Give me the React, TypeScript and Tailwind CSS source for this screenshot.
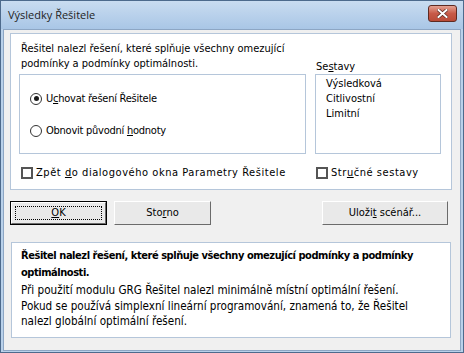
import React from 'react'

const Radio = ({ checked }: { checked?: boolean }) => (
  <span className="w-[12px] h-[12px] rounded-full border-[1.5px] border-[#333] bg-white flex items-center justify-center shrink-0">
    {checked && <span className="w-[5px] h-[5px] rounded-full bg-[#1a1a1a]" />}
  </span>
)

const Check = () => (
  <span className="w-[12px] h-[12px] border-2 border-[#555] bg-white shrink-0" />
)

const Btn = ({ children, w, isDefault }: { children: React.ReactNode; w: string; isDefault?: boolean }) => (
  <button
    className={`${w} h-[24px] ${isDefault ? 'border border-black' : ''} bg-[#e9e9e9] p-0`}
  >
    <span className="flex h-full w-full border-t border-l border-t-white border-l-white border-b border-r border-b-[#6b6b6b] border-r-[#6b6b6b] items-center justify-center">
      {isDefault ? (
        <span className="flex items-center justify-center w-[calc(100%-6px)] h-[calc(100%-6px)] border border-dotted border-black">
          {children}
        </span>
      ) : (
        children
      )}
    </span>
  </button>
)

export default function App() {
  return (
    <div className="w-[464px] h-[353px] flex flex-col border border-[#4d6a8c] bg-[#b9d1ea] text-[11px] text-black font-['DejaVu_Sans_Condensed',sans-serif]">
      {/* title bar */}
      <div className="h-[28px] flex items-start justify-between bg-gradient-to-b from-[#c9dcf0] to-[#a9c6e6] pl-[7px] pr-[6px]">
        <span className="mt-[6px] text-[11px] font-['Open_Sans',sans-serif] text-[#1e1e1e]">Výsledky Řešitele</span>
        <span className="mt-[4px] w-[29px] h-[17px] rounded-[3px] border border-[#5e2a22] bg-gradient-to-b from-[#e3a193] via-[#c75a48] to-[#b94b38] flex items-center justify-center">
          <svg width="11" height="9" viewBox="0 0 11 9">
            <path d="M1.5 1 L9.5 8 M9.5 1 L1.5 8" stroke="#5a2a22" strokeWidth="3.4" strokeLinecap="square" />
            <path d="M1.5 1 L9.5 8 M9.5 1 L1.5 8" stroke="#fff" strokeWidth="2" strokeLinecap="square" />
          </svg>
        </span>
      </div>

      {/* client */}
      <div className="flex-1 mx-[2px] mb-[1px] border border-[#8da6c4] bg-[#f0f0f0] flex flex-col px-[6px] pt-[3px]">
        {/* top panel */}
        <div className="w-[442px] h-[157px] border border-[#b5c6da] bg-white flex flex-col pl-[8px] pt-[7px]">
          <div className="flex items-end">
            <div className="flex flex-col w-[287px]">
              <p className="ml-[2px] leading-[15px] w-[300px]">
                Řešitel nalezl řešení, které splňuje všechny omezující podmínky a podmínky optimálnosti.
              </p>
              <div className="mt-[3px] w-[287px] h-[80px] border border-[#b5c6da] flex flex-col pl-[10px] pt-[16px] gap-[17px] tracking-[-0.25px]">
                <label className="flex items-center gap-[4px] leading-[15px]">
                  <Radio checked />
                  <span>U<u>c</u>hovat řešení Řešitele</span>
                </label>
                <label className="flex items-center gap-[4px] leading-[15px]">
                  <Radio />
                  <span>Obnovit původní <u>h</u>odnoty</span>
                </label>
              </div>
            </div>
            <div className="ml-[9px] flex flex-col">
              <span className="leading-[15px] ml-[1px]">Se<u>s</u>tavy</span>
              <div className="w-[126px] h-[80px] border border-[#b5c6da] flex flex-col pl-[10px] pt-[1px] leading-[15px]">
                <span>Výsledková</span>
                <span>Citlivostní</span>
                <span>Limitní</span>
              </div>
            </div>
          </div>
          <div className="flex items-center mt-[11px] leading-[15px] tracking-[0.55px]">
            <label className="flex items-center gap-[3px] ml-[2px] w-[295px]">
              <Check />
              <span>Zpět <u>d</u>o dialogového okna Parametry Řešitele</span>
            </label>
            <label className="flex items-center gap-[3px]">
              <Check />
              <span>Str<u>u</u>čné sestavy</span>
            </label>
          </div>
        </div>

        {/* buttons */}
        <div className="flex items-center mt-[11px]">
          <Btn w="w-[97px]" isDefault>
            <span><u>O</u>K</span>
          </Btn>
          <div className="ml-[7px]">
            <Btn w="w-[97px]">
              <span>Sto<u>r</u>no</span>
            </Btn>
          </div>
          <div className="ml-auto mr-[6px]">
            <Btn w="w-[126px]">
              <span>Uloži<u>t</u> scénář...</span>
            </Btn>
          </div>
        </div>

        {/* message panel */}
        <div className="mt-[17px] w-[440px] h-[96px] ml-[1px] border border-[#b5c6da] bg-white pl-[9px] pt-[4px]">
          <p className="font-bold leading-[17px] tracking-[-0.45px]">
            Řešitel nalezl řešení, které splňuje všechny omezující podmínky a podmínky
            <br />
            optimálnosti.
          </p>
          <p className="mt-[2px] leading-[15.5px] text-[11.6px]">
            Při použití modulu GRG Řešitel nalezl minimálně místní optimální řešení.
            <br />
            Pokud se používá simplexní lineární programování, znamená to, že Řešitel
            <br />
            nalezl globální optimální řešení.
          </p>
        </div>
      </div>
    </div>
  )
}
